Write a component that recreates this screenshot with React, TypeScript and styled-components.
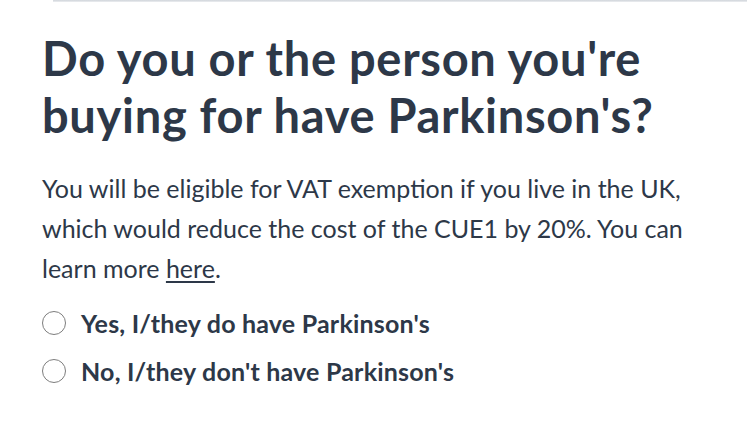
import styled, { createGlobalStyle } from "styled-components";

const GlobalStyle = createGlobalStyle`
  html, body {
    margin: 0;
    padding: 0;
    background: #ffffff;
  }
  body {
    font-family: Lato, "Open Sans", Arial, sans-serif;
    color: #2d3848;
  }
`;

const Page = styled.div`
  width: 747px;
  height: 427px;
  overflow: hidden;
  box-sizing: border-box;
`;

const TopRule = styled.div`
  height: 2px;
  margin-left: 53px;
  background: linear-gradient(#cfd4da, #eceef1);
`;

const Question = styled.section`
  padding: 0 42px;
`;

const Title = styled.h1`
  margin: 28px 0 0;
  font-size: 47px;
  line-height: 57px;
  font-weight: 700;
  color: #2d3848;
  letter-spacing: 0.7px;
`;

const Lead = styled.p`
  margin: 24px 0 0;
  font-size: 25px;
  line-height: 40px;
  font-weight: 400;
  color: #2d3848;
  max-width: 665px;

  a {
    color: inherit;
    text-decoration: underline;
    text-decoration-thickness: 1.5px;
    text-underline-offset: 3px;
  }
`;

const Options = styled.div`
  margin-top: 18px;
  display: flex;
  flex-direction: column;
  gap: 14px;
`;

const Option = styled.label`
  display: flex;
  align-items: center;
  gap: 15px;
  font-size: 25px;
  font-weight: 700;
  line-height: 34px;
  letter-spacing: 0.2px;
  cursor: pointer;
`;

const Radio = styled.span<{ $checked?: boolean }>`
  width: 24px;
  height: 24px;
  box-sizing: border-box;
  border-radius: 50%;
  border: 1.5px solid #7d7d7d;
  background: ${({ $checked }) => ($checked ? "#2d3848" : "#ffffff")};
  flex-shrink: 0;
`;

const answers = [
  "Yes, I/they do have Parkinson's",
  "No, I/they don't have Parkinson's",
];

const App = () => {
  return (
    <Page>
      <GlobalStyle />
      <TopRule />
      <Question>
        <Title>
          Do you or the person you're
          <br />
          buying for have Parkinson's?
        </Title>
        <Lead>
          You will be eligible for VAT exemption if you live in the UK, which
          would reduce the cost of the CUE1 by 20%. You can learn more{" "}
          <a href="#">here</a>.
        </Lead>
        <Options>
          {answers.map((text) => (
            <Option key={text}>
              <Radio />
              {text}
            </Option>
          ))}
        </Options>
      </Question>
    </Page>
  );
};

export default App;
